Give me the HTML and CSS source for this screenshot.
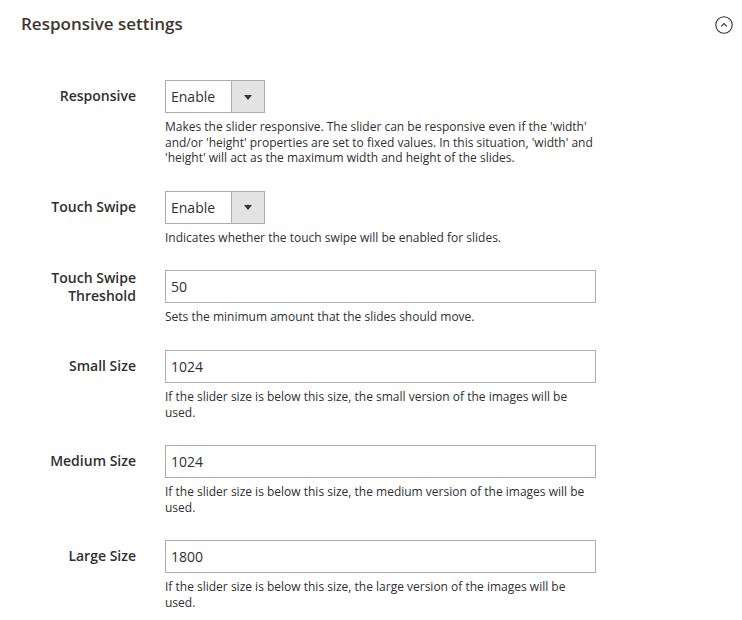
FILE: index.html
```html
<!DOCTYPE html>
<html>
<head>
<meta charset="utf-8">
<link rel="stylesheet" href="styles.css">
</head>
<body>
<div class="section">
  <div class="section-header">
    <h2 class="section-title">Responsive settings</h2>
    <span class="collapse-icon">
      <svg width="18" height="18" viewBox="0 0 18 18"><circle cx="9" cy="9" r="8.2" fill="none" stroke="#303030" stroke-width="1.1"/><path d="M6.2 10.4 L9 7.6 L11.8 10.4" fill="none" stroke="#303030" stroke-width="1.1"/></svg>
    </span>
  </div>
  <div class="fields">
    <div class="field">
      <label class="field-label">Responsive</label>
      <div class="field-control">
        <div class="select"><span class="select-value">Enable</span><span class="select-arrow"></span></div>
        <div class="note">Makes the slider responsive. The slider can be responsive even if the 'width' and/or 'height' properties are set to fixed values. In this situation, 'width' and 'height' will act as the maximum width and height of the slides.</div>
      </div>
    </div>
    <div class="field">
      <label class="field-label">Touch Swipe</label>
      <div class="field-control">
        <div class="select"><span class="select-value">Enable</span><span class="select-arrow"></span></div>
        <div class="note">Indicates whether the touch swipe will be enabled for slides.</div>
      </div>
    </div>
    <div class="field">
      <label class="field-label multiline">Touch Swipe Threshold</label>
      <div class="field-control">
        <div class="input">50</div>
        <div class="note">Sets the minimum amount that the slides should move.</div>
      </div>
    </div>
    <div class="field">
      <label class="field-label">Small Size</label>
      <div class="field-control">
        <div class="input">1024</div>
        <div class="note">If the slider size is below this size, the small version of the images will be used.</div>
      </div>
    </div>
    <div class="field">
      <label class="field-label">Medium Size</label>
      <div class="field-control">
        <div class="input">1024</div>
        <div class="note">If the slider size is below this size, the medium version of the images will be used.</div>
      </div>
    </div>
    <div class="field">
      <label class="field-label">Large Size</label>
      <div class="field-control">
        <div class="input">1800</div>
        <div class="note">If the slider size is below this size, the large version of the images will be used.</div>
      </div>
    </div>
  </div>
</div>
</body>
</html>
```
FILE: styles.css
```css
html, body {
  margin: 0;
  padding: 0;
  background: #fff;
}
body {
  font-family: "Open Sans", "Liberation Sans", sans-serif;
  color: #303030;
}
.section-header {
  display: flex;
  justify-content: space-between;
  align-items: center;
  padding: 13px 9px 0 21px;
  height: 22px;
}
.section-title {
  margin: 0;
  font-size: 17px;
  font-weight: 600;
  line-height: 20px;
  color: #41362f;
}
.collapse-icon {
  display: flex;
  margin-top: 2px;
}
.fields {
  padding-top: 45px;
}
.field {
  display: grid;
  grid-template-columns: 136px 431px;
  column-gap: 29px;
  margin-bottom: 25px;
}
.field-label {
  font-size: 14px;
  font-weight: 600;
  line-height: 32px;
  text-align: right;
  color: #303030;
}
.field-label.multiline {
  line-height: 18px;
  margin-top: -1px;
}
.select {
  display: flex;
  width: 98px;
  height: 31px;
  border: 1px solid #adadad;
  background: #fff;
}
.select-value {
  flex: 1;
  font-size: 14px;
  line-height: 31px;
  padding-left: 5px;
}
.select-arrow {
  width: 32px;
  background: #e3e3e3;
  border-left: 1px solid #adadad;
  display: flex;
  align-items: center;
  justify-content: center;
}
.select-arrow::after {
  content: "";
  border-left: 4px solid transparent;
  border-right: 4px solid transparent;
  border-top: 5px solid #41362f;
  margin-top: 1px;
}
.input {
  box-sizing: border-box;
  width: 431px;
  height: 33px;
  border: 1px solid #adadad;
  font-size: 14px;
  line-height: 31px;
  padding-left: 5px;
}
.note {
  margin-top: 6px;
  font-size: 12px;
  line-height: 15.6px;
  width: 430px;
  color: #303030;
}
```
